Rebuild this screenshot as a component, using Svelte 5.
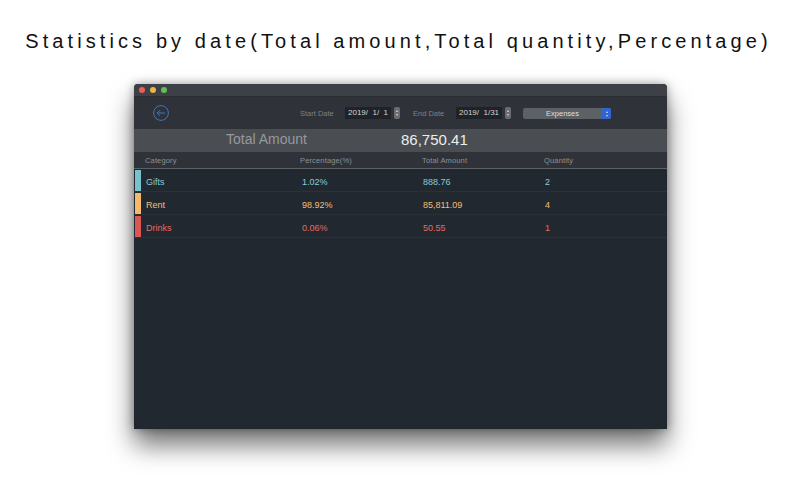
<script>
  const rows = [
    { name: 'Gifts', pct: '1.02%', amount: '888.76', qty: '2', color: '#79c3cf', text: '#86ced8' },
    { name: 'Rent', pct: '98.92%', amount: '85,811.09', qty: '4', color: '#f5b968', text: '#f7bd73' },
    { name: 'Drinks', pct: '0.06%', amount: '50.55', qty: '1', color: '#dc5753', text: '#e56a64' }
  ];
</script>

<div class="page">
  <h1>Statistics by date(Total amount,Total quantity,Percentage)</h1>
  <div class="window">
    <div class="titlebar">
      <span class="light red"></span>
      <span class="light yellow"></span>
      <span class="light green"></span>
    </div>
    <div class="toolbar">
      <svg class="back" width="16" height="16" viewBox="0 0 16 16" fill="none" stroke="#3f77b8" stroke-width="1">
        <circle cx="8" cy="8" r="7.4" />
        <path d="M12 8H4.2M7 5.2 4.2 8 7 10.8" />
      </svg>
      <span class="label start">Start Date</span>
      <span class="date">2019/&nbsp;&nbsp;1/&nbsp;&nbsp;1</span>
      <span class="stepper"><i class="up"></i><i class="down"></i></span>
      <span class="label end">End Date</span>
      <span class="date">2019/&nbsp;&nbsp;1/31</span>
      <span class="stepper"><i class="up"></i><i class="down"></i></span>
      <span class="select">
        <span class="select-text">Expenses</span>
        <span class="select-btn"><i class="up"></i><i class="down"></i></span>
      </span>
    </div>
    <div class="band">
      <span class="band-label">Total Amount</span>
      <span class="band-value">86,750.41</span>
    </div>
    <div class="head grid">
      <span>Category</span>
      <span>Percentage(%)</span>
      <span>Total Amount</span>
      <span>Quantity</span>
    </div>
    {#each rows as r}
      <div class="row grid" style="color: {r.text}">
        <span class="swatch" style="background: {r.color}"></span>
        <span>{r.name}</span>
        <span>{r.pct}</span>
        <span>{r.amount}</span>
        <span>{r.qty}</span>
      </div>
    {/each}
  </div>
</div>

<style>
  :global(body) {
    margin: 0;
    background: #fff;
  }
  .page {
    width: 800px;
    height: 500px;
    overflow: hidden;
    font-family: "Liberation Sans", Arial, sans-serif;
  }
  h1 {
    margin: 0;
    padding: 29px 3px 0 0;
    height: 24px;
    font-size: 20px;
    line-height: 24px;
    font-weight: 400;
    letter-spacing: 4.1px;
    text-align: center;
    color: #111;
    white-space: nowrap;
  }
  .window {
    box-sizing: border-box;
    width: 533px;
    height: 345px;
    margin: 31px 0 0 134px;
    background: #22282f;
    border-radius: 4px 4px 0 0;
    box-shadow: 0 16px 26px rgba(0, 0, 0, 0.55), 0 0 10px rgba(0, 0, 0, 0.35);
    overflow: hidden;
  }
  .titlebar {
    height: 13px;
    display: flex;
    align-items: center;
    gap: 5px;
    padding-left: 5px;
    background: #3d4147;
    border-bottom: 1px solid #2a2e33;
    box-sizing: border-box;
  }
  .light {
    width: 6px;
    height: 6px;
    border-radius: 50%;
  }
  .red { background: #ec5f56; }
  .yellow { background: #e9b83c; }
  .green { background: #5fc14f; }
  .toolbar {
    height: 32px;
    background: #2f3339;
    display: flex;
    align-items: center;
    box-sizing: border-box;
  }
  .back {
    margin-left: 19px;
    flex: none;
  }
  .label {
    font-size: 7.5px;
    color: #7c8085;
    white-space: nowrap;
  }
  .start {
    margin-left: 131px;
    width: 45px;
  }
  .end {
    margin-left: 13px;
    width: 43px;
  }
  .date {
    width: 46px;
    height: 12px;
    line-height: 12px;
    box-sizing: border-box;
    padding-left: 3px;
    background: #1f2328;
    font-size: 8px;
    color: #d2d4d6;
    white-space: nowrap;
  }
  .stepper {
    width: 6px;
    height: 12px;
    margin-left: 3px;
    border-radius: 2px;
    background: #6a6e73;
    display: flex;
    flex-direction: column;
    align-items: center;
    justify-content: center;
    gap: 2px;
  }
  .up, .down {
    display: block;
    width: 0;
    height: 0;
    border-left: 1.5px solid transparent;
    border-right: 1.5px solid transparent;
  }
  .up { border-bottom: 2px solid #d8dadc; }
  .down { border-top: 2px solid #d8dadc; }
  .select {
    margin-left: 12px;
    margin-top: 1px;
    width: 88px;
    height: 11px;
    border-radius: 2px;
    background: #5c6165;
    display: flex;
    align-items: center;
    overflow: hidden;
  }
  .select-text {
    flex: 1;
    text-align: center;
    font-size: 7.5px;
    color: #dcdee0;
  }
  .select-btn {
    width: 9px;
    height: 11px;
    background: #2f66d0;
    display: flex;
    flex-direction: column;
    align-items: center;
    justify-content: center;
    gap: 2px;
  }
  .band {
    height: 23px;
    box-sizing: border-box;
    padding-bottom: 3px;
    background: #4a4e52;
    display: flex;
    align-items: center;
    white-space: nowrap;
  }
  .band-label {
    margin-left: 92px;
    width: 175px;
    font-size: 14px;
    color: #96999c;
  }
  .band-value {
    font-size: 15px;
    color: #eceded;
  }
  .grid {
    display: grid;
    grid-template-columns: 155px 122px 122px 1fr;
    align-items: center;
    padding-left: 11px;
    box-sizing: border-box;
  }
  .head {
    height: 17px;
    background: #2f3339;
    border-bottom: 1px solid #5c6165;
    font-size: 7.5px;
    color: #8d9195;
    letter-spacing: 0.15px;
  }
  .row {
    position: relative;
    height: 23px;
    padding-top: 3px;
    border-bottom: 1px solid #2c3137;
    font-size: 9px;
    grid-template-columns: 156px 121px 122px 1fr;
    padding-left: 12px;
  }
  .swatch {
    position: absolute;
    left: 1px;
    top: 1px;
    bottom: 0;
    width: 6px;
  }
</style>
